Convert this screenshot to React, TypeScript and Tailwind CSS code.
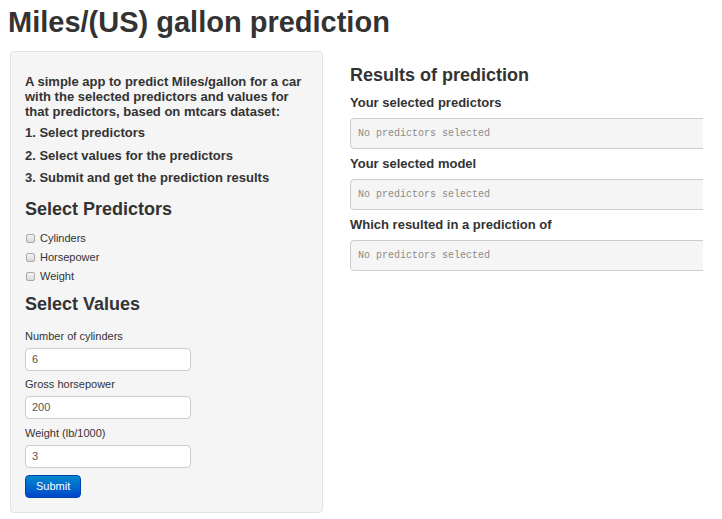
import React from 'react';

const steps = [
  '1. Select predictors',
  '2. Select values for the predictors',
  '3. Submit and get the prediction results',
];

const predictors = ['Cylinders', 'Horsepower', 'Weight'];

const fields = [
  { label: 'Number of cylinders', value: '6', gap: 'mt-[5px]' },
  { label: 'Gross horsepower', value: '200', gap: 'mt-[5px]' },
  { label: 'Weight (lb/1000)', value: '3', gap: 'mt-[6px]' },
];

const results = [
  'Your selected predictors',
  'Your selected model',
  'Which resulted in a prediction of',
];

function Checkbox({ label }: { label: string }) {
  return (
    <label className="flex h-[19px] items-center text-[11px] leading-[19px] text-[#333]">
      <span className="ml-[1px] mr-[5px] h-[9px] w-[9px] rounded-[2px] border border-[#a8a8a8] bg-gradient-to-b from-[#f4f4f4] to-[#d9d9d9]" />
      <span>{label}</span>
    </label>
  );
}

function NumberField({
  label,
  value,
  gap,
  first,
}: {
  label: string;
  value: string;
  gap: string;
  first?: boolean;
}) {
  return (
    <div className={first ? 'mt-[14px]' : gap}>
      <div className="text-[11px] leading-[16px] text-[#333]">{label}</div>
      <div className="mt-[4px] flex h-[23px] w-[166px] items-center rounded-[4px] border border-[#cccccc] bg-white pl-[6px] text-[11px] text-[#555]">
        {value}
      </div>
    </div>
  );
}

export default function App() {
  return (
    <div className="min-h-[519px] bg-white pt-[4px] font-['Liberation_Sans',Arial,sans-serif] text-[#333]">
      <h1 className="pl-[8px] text-[29px] font-bold leading-[36px] text-[#333]">
        Miles/(US) gallon prediction
      </h1>

      <div className="mt-[11px] flex items-start pl-[10px]">
        {/* sidebar */}
        <div className="flex h-[462px] w-[313px] shrink-0 flex-col items-start rounded-[4px] border border-[#e3e3e3] bg-[#f5f5f5] px-[14px] pt-[22px]">
          <p className="text-[13px] font-bold leading-[15px]">
            A simple app to predict Miles/gallon for a car
            <br />
            with the selected predictors and values for
            <br />
            that predictors, based on mtcars dataset:
          </p>
          <div className="mt-[3px]">
            {steps.map((s) => (
              <div key={s} className="text-[13px] font-bold leading-[22.5px]">
                {s}
              </div>
            ))}
          </div>

          <h3 className="mt-[9px] text-[18px] font-bold leading-[20px]">Select Predictors</h3>
          <div className="mt-[10px]">
            {predictors.map((p) => (
              <Checkbox key={p} label={p} />
            ))}
          </div>

          <h3 className="mt-[8px] text-[18px] font-bold leading-[20px]">Select Values</h3>
          {fields.map((f, i) => (
            <NumberField key={f.label} label={f.label} value={f.value} gap={f.gap} first={i === 0} />
          ))}

          <button
            type="button"
            className="mt-[7px] flex h-[23px] items-center rounded-[4px] border border-[#0044aa] bg-gradient-to-b from-[#0088cc] to-[#0044cc] px-[10px] text-[11px] text-white"
          >
            Submit
          </button>
        </div>

        {/* main */}
        <div className="ml-[27px] flex w-[353px] shrink-0 flex-col overflow-hidden pt-[14px]">
          <h3 className="text-[18px] font-bold leading-[20px]">Results of prediction</h3>
          <div className="flex flex-col pt-[3px]">
            {results.map((r) => (
              <div key={r} className="flex flex-col">
                <h5 className="mt-[7px] text-[13px] font-bold leading-[16px]">{r}</h5>
                <pre className="mt-[7px] flex h-[31px] w-[380px] items-center rounded-[4px] border border-[#cccccc] bg-[#f5f5f5] pl-[7px] font-['Liberation_Mono',monospace] text-[10px] text-[#8a8a8a]">
                  No predictors selected
                </pre>
              </div>
            ))}
          </div>
        </div>
      </div>
    </div>
  );
}
